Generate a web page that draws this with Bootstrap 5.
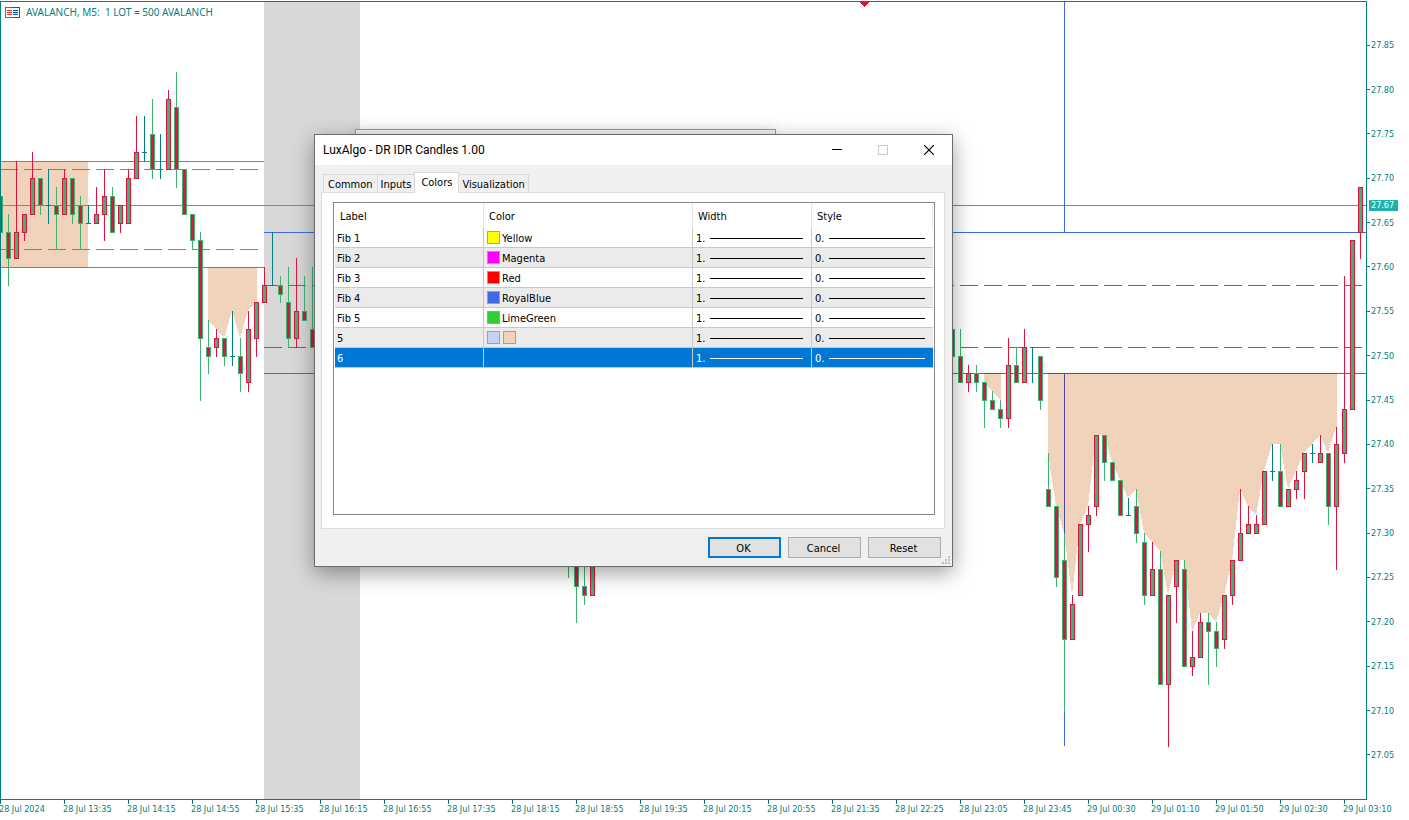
<!DOCTYPE html>
<html lang="en">
<head>
<meta charset="utf-8">
<meta name="viewport" content="width=device-width, initial-scale=1">
<title>AVALANCH, M5</title>
<link href="https://cdn.jsdelivr.net/npm/bootstrap@5.3.0/dist/css/bootstrap.min.css" rel="stylesheet">
<style>
  :root { --axis: #008080; --ui: "DejaVu Sans Condensed", "DejaVu Sans", sans-serif; }
  body { font-family: var(--ui); font-size: 9px; line-height: 12px; color: var(--axis); background: #fff; }
  .plot { border: 1px solid var(--axis); margin-top: 1px; }
  .plot svg.candles { display: block; width: 100%; height: 100%; }
  .caption-line { left: 4px; top: 3px; font: 10px/14px "Noto Sans", sans-serif; white-space: pre; gap: 6px; }
  .prices { width: 42px; padding: 23px 0; }
  .prices li { flex: 1 1 0; gap: 1px; }
  .prices li::before { content: ""; width: 3px; height: 1px; background: var(--axis); }
  .price-tag { left: 2px; top: 200px; width: 29px; height: 11px; line-height: 11px; padding-left: 2px; background: #20b2aa; color: #fff; }
  .times { height: 20px; }
  .times li { flex: 0 0 64px; white-space: nowrap; padding-top: 3px; text-indent: -1px; background: linear-gradient(var(--axis), var(--axis)) 0 0 / 1px 4px no-repeat; }

  .win { background: #f0f0f0; border: 1px solid #6b6b6b; color: #000; font-size: 11px; line-height: 14px; }
  .win-back { left: 355px; top: 129px; width: 421px; height: 60px; border-color: #999; box-shadow: 0 0 12px rgba(0,0,0,.1); }
  .win-front { left: 314px; top: 134px; width: 639px; box-shadow: 0 6px 20px rgba(0,0,0,.38); }
  .titlebar { height: 30px; background: #fff; padding-left: 8px; font: 12px/16px Roboto, sans-serif; }
  .titlebar button { width: 46px; height: 30px; border: 0; background: none; padding: 0; display: grid; place-items: center; }
  .win-body { padding: 7px 7px 8px 6px; }
  .tabs { height: 20px; padding-left: 2px; }
  .tabs button { height: 18px; padding: 2px 3px 0 3px; border: 1px solid #d9d9d9; border-width: 1px 1px 0 0; background: #f0f0f0; font-size: 11px; line-height: 14px; text-align: center; white-space: nowrap; color: #000; }
  .tabs button:first-child { padding: 2px 4px 0 4px; border-left-width: 1px; }
  .tabs button.active { height: 21px; padding: 0 6px 0 6px; background: #fff; z-index: 1; margin: 0 0 -1px -1px; border-left-width: 1px; }
  .panel { border: 1px solid #dcdcdc; background: #fff; padding: 9px 9px 13px 11px; }
  .listbox { border: 1px solid #828790; height: 313px; padding: 0 1px; }
  .grid-table { width: 100%; table-layout: fixed; border-collapse: separate; border-spacing: 0; }
  .grid-table .c-label { width: 149px; }
  .grid-table .c-color { width: 209px; }
  .grid-table .c-width { width: 119px; }
  .grid-table th { height: 25px; padding: 3px 5px 0 5px; font-weight: 400; border-right: 1px solid #e5e5e5; vertical-align: middle; }
  .grid-table td { height: 20px; padding: 2px 3px 0 3px; border-right: 1px solid #c8c8c8; border-bottom: 1px solid #c8c8c8; vertical-align: middle; white-space: nowrap; }
  .grid-table td:first-child { padding-left: 2px; }
  .grid-table td:last-child { border-right: 0; }
  .grid-table tr:nth-child(even) td { background: #ebebeb; }
  .grid-table tr.picked td { background: #0078d7; color: #fff; border-bottom-color: #a9cdea; }
  .swatches { gap: 2px; line-height: 16px; }
  .swatches .swatch + .swatch { margin-left: 1px; }
  .swatch { width: 13px; height: 13px; border: 1px solid #a0a0a0; flex: none; margin-bottom: 3px; }
  .stroke { height: 1px; flex: 1 1 0; background: currentColor; margin: 0 5px 0 5px; }
  .commands { gap: 7px; }
  .cmd { width: 73px; height: 21px; padding: 2px 2px 0 0; border: 1px solid #adadad; background: #e1e1e1; border-radius: 0; font-size: 11px; line-height: 14px; color: #000; }
  .cmd.main { border: 2px solid #0078d7; }
  .grip { right: 2px; bottom: 2px; }
</style>
</head>
<body class="vh-100 d-flex flex-column overflow-hidden position-relative">
  <main class="d-flex flex-fill overflow-hidden">
    <div class="plot flex-fill position-relative overflow-hidden">
      <svg class="candles" id="chart" shape-rendering="crispEdges" role="img" aria-label="AVALANCH M5 candlestick chart"></svg>
      <div class="caption-line position-absolute d-flex align-items-center">
        <svg width="15" height="11" viewBox="0 0 15 11" shape-rendering="crispEdges">
          <path d="M7 0H0v11h7z" fill="#e03c31"/><path d="M7 1H1v9h6z" fill="#fff"/>
          <path d="M7 0h8v11H7z" fill="#0063b1"/><path d="M7 1h7v9H7z" fill="#fff"/>
          <path d="M2 3h5v5H2z" fill="#fbd5d2"/><path d="M8 3h5v5H8z" fill="#b9dcf7"/>
          <path d="M2 3h5v1H2zM2 5h5v1H2zM2 7h5v1H2z" fill="#e03c31"/>
          <path d="M8 3h5v1H8zM8 5h5v1H8zM8 7h5v1H8z" fill="#0063b1"/>
        </svg>
        <span>AVALANCH, M5:  1 LOT = 500 AVALANCH</span>
      </div>
    </div>
    <div class="position-relative">
      <ul class="prices list-unstyled m-0 h-100 d-flex flex-column" id="prices"></ul>
      <div class="price-tag position-absolute">27.67</div>
    </div>
  </main>
  <ul class="times list-unstyled m-0 d-flex overflow-hidden" id="times"></ul>

  <div class="win win-back position-absolute"></div>
  <section class="win win-front position-absolute" role="dialog" aria-labelledby="dlg">
    <header class="titlebar d-flex align-items-center">
      <span id="dlg" class="me-auto">LuxAlgo - DR IDR Candles 1.00</span>
      <button aria-label="Minimize"><svg width="10" height="10"><path d="M0 4.500h10" stroke="#000"/></svg></button>
      <button aria-label="Maximize" disabled><svg width="10" height="10"><path d="M.5 .5h9v9h-9z" fill="none" stroke="#c8c8c8"/></svg></button>
      <button aria-label="Close"><svg width="10" height="10"><path d="M0 0l10 10M10 0L0 10" stroke="#000" stroke-width="1.200"/></svg></button>
    </header>
    <div class="win-body">
      <div class="tabs d-flex align-items-end" role="tablist">
        <button role="tab">Common</button><button role="tab">Inputs</button><button role="tab" class="active" aria-selected="true">Colors</button><button role="tab">Visualization</button>
      </div>
      <div class="panel">
        <div class="listbox">
          <table class="grid-table">
            <colgroup><col class="c-label"><col class="c-color"><col class="c-width"><col></colgroup>
            <thead><tr><th>Label</th><th>Color</th><th>Width</th><th>Style</th></tr></thead>
            <tbody id="rows"></tbody>
          </table>
        </div>
      </div>
      <div class="commands d-flex justify-content-end pt-2 pe-1">
        <button class="cmd main">OK</button><button class="cmd">Cancel</button><button class="cmd">Reset</button>
      </div>
    </div>
    <svg class="grip position-absolute" width="8" height="8" fill="#bfbfbf"><path d="M6 0h2v2h-2zM3 3h2v2h-2zM6 3h2v2h-2zM0 6h2v2h-2zM3 6h2v2h-2zM6 6h2v2h-2z"/></svg>
  </section>

<script src="https://cdn.jsdelivr.net/npm/bootstrap@5.3.0/dist/js/bootstrap.bundle.min.js"></script>
<script>
// Each candle: open, close, high, low, in cents above 27.00; runs are keyed by bar index.
const runs = {
  0: [[68,64,68,64],[64,61,66,58],[61,64,72,61],[64,66,66,63],[66,70,73,66],[70,67,70,66],[67,67,71,65],[67,66,69,62],[66,70,71,66],[70,66,70,65],
      [67,65,68,62],[65,65,67,65],[65,66,69,65],[66,68,71,63],[68,64,69,64],[65,67,67,64],[65,70,71,65],[70,73,77,70],[73,73,77,72],[75,71,79,70],
      [71,71,75,70],[71,79,80,71],[78,71,82,69],[71,66,71,66],[66,63,66,62],[63,52,64,45],[51,50,54,48],[51,52,53,50],[52,50,52,49],[50,50,55,49],
      [50,48,52,46],[47,53,55,46],[52,56,56,50],[56,58,60,56],[58,58,64,58],[58,57,59,56],[56,52,60,51],[52,55,61,51],[55,54,59,54],[53,51,60,51]],
  71: [[30,28,30,25],[30,24,31,20],[24,23,28,22],[23,30,31,23]],
  119: [[53,50,54,50],[50,47,53,47],[47,48,49,46],[48,47,49,46],[47,45,47,42],[45,44,46,44],[44,43,45,42],[43,49,52,42],[49,47,51,47],[47,51,53,47],
      [51,51,51,47],[50,45,50,44],[35,33,39,33],[33,25,33,24],[27,18,30,10],[18,22,23,18],[23,31,31,23],[31,32,33,28],[33,41,41,32],[41,38,41,36],
      [38,36,38,36],[36,32,36,32],[32,32,34,32],[33,30,35,29],[29,23,30,22],[23,26,29,23],[26,13,28,13],[13,23,23,6],[24,27,27,20],[26,15,27,15],
      [15,16,19,14],[16,20,21,16],[20,19,21,13],[19,17,20,15],[18,23,23,17],[23,27,27,22],[27,30,35,27],[30,31,33,30],[30,31,32,30],[31,37,37,31],
      [37,37,40,36],[37,33,40,33],[33,35,35,33],[35,36,37,34],[37,39,39,34],[39,39,40,38],[38,39,41,38],[39,33,39,31],[33,40,42,26],[39,44,59,38],
      [44,63,63,44],[64,69,69,61]]
};
const bars = {};
for (const start in runs) runs[start].forEach((b, k) => bars[+start + k] = b);
const y = c => Math.round(45.3 + (85 - c) * 8.868);
const out = [];
const rect = (x, t, w, h, f) => out.push(`<rect x="${x}" y="${t}" width="${w}" height="${h}" fill="${f}"/>`);
const row = (x1, x2, c, col, dash) => out.push(`<path d="M${x1} ${y(c) + .5}H${x2}" stroke="${col}"${dash ? ' stroke-dasharray="18 6"' : ''}/>`);
const peach = '#f1d3bc', choc = '#d2691e', blue = '#4169e1', mixed = '#5545aa';
// Area between a base level and the bar highs.
const area = (from, to, base) => {
  let d = `M${from * 8} ${y(base)}`;
  for (let i = from; i <= to; i++) d += `L${i * 8} ${y(bars[i][2])}`;
  out.push(`<path d="${d}H${to * 8 + 1}V${y(base)}z" fill="${peach}"/>`);
};
rect(264, 2, 96, 797, '#d8d8d8');
rect(0, y(72), 88, y(60) - y(72), peach);
area(26, 32, 60); area(123, 125, 48); area(131, 167, 48);
row(0, 264, 72, choc); row(0, 258, 71, choc, 1); row(0, 258, 62, choc, 1); row(0, 264, 60, choc);
row(208, 257, 60, '#e04a58');
row(0, 1366, 67, '#20b2aa');
row(264, 1366, 64, blue); row(264, 1366, 58, blue, 1); row(264, 1366, 51, blue, 1); row(264, 1366, 48, blue);
rect(1064, 2, 1, 230, blue); rect(1064, 373, 1, 373, blue);
rect(1064, 373, 1, 160, mixed); row(984, 1001, 48, mixed); row(1048, 1337, 48, mixed);
for (const i in bars) {
  const [o, c, h, l] = bars[i], x = i * 8;
  const edge = o === c ? '#008080' : c > o ? '#dc143c' : '#3cb371';
  rect(x, y(h), 1, y(l) - y(h) + 1, edge);
  if (o === c) { rect(x - 2, y(o), 5, 1, edge); continue; }
  const t = y(Math.max(o, c)), b = y(Math.min(o, c));
  rect(x - 2, t, 5, b - t + 1, edge);
  rect(x - 1, t + 1, 3, b - t - 1, c > o ? '#3cb371' : '#dc143c');
}
out.push('<path d="M860 2h9v1h-1v1h-1v1h-1v1h-1v1h-1v-1h-1v-1h-1v-1h-1v-1h-1z" fill="#dc143c"/>');
// The plot's own border takes one column and two rows of the bar coordinates.
document.getElementById('chart').innerHTML = `<g transform="translate(-1 -2)">${out.join('')}</g>`;

let p = '';
for (let c = 85; c >= 5; c -= 5) p += `<li class="d-flex align-items-center">27.${String(c).padStart(2, '0')}</li>`;
document.getElementById('prices').innerHTML = p;
document.getElementById('times').innerHTML = ['28 Jul 2024','28 Jul 13:35','28 Jul 14:15','28 Jul 14:55','28 Jul 15:35','28 Jul 16:15','28 Jul 16:55','28 Jul 17:35','28 Jul 18:15','28 Jul 18:55','28 Jul 19:35','28 Jul 20:15','28 Jul 20:55','28 Jul 21:35','28 Jul 22:25','28 Jul 23:05','28 Jul 23:45','29 Jul 00:30','29 Jul 01:10','29 Jul 01:50','29 Jul 02:30','29 Jul 03:10'].map(t => `<li>${t}</li>`).join('');

const levels = [['Fib 1',['#ffff00'],'Yellow'],['Fib 2',['#ff00ff'],'Magenta'],['Fib 3',['#ff0000'],'Red'],['Fib 4',['#4169e1'],'RoyalBlue'],['Fib 5',['#32cd32'],'LimeGreen'],['5',['#c6d2f6','#f1d3bc'],''],['6',[],'']];
document.getElementById('rows').innerHTML = levels.map(([n, cs, t], i) => `<tr${i === 6 ? ' class="picked"' : ''}><td>${n}</td><td><div class="swatches d-flex align-items-center">${cs.map(c => `<span class="swatch" style="background:${c}"></span>`).join('')}${t}</div></td><td><div class="d-flex align-items-center">1.<span class="stroke"></span></div></td><td><div class="d-flex align-items-center">0.<span class="stroke"></span></div></td></tr>`).join('');
</script>
</body>
</html>
